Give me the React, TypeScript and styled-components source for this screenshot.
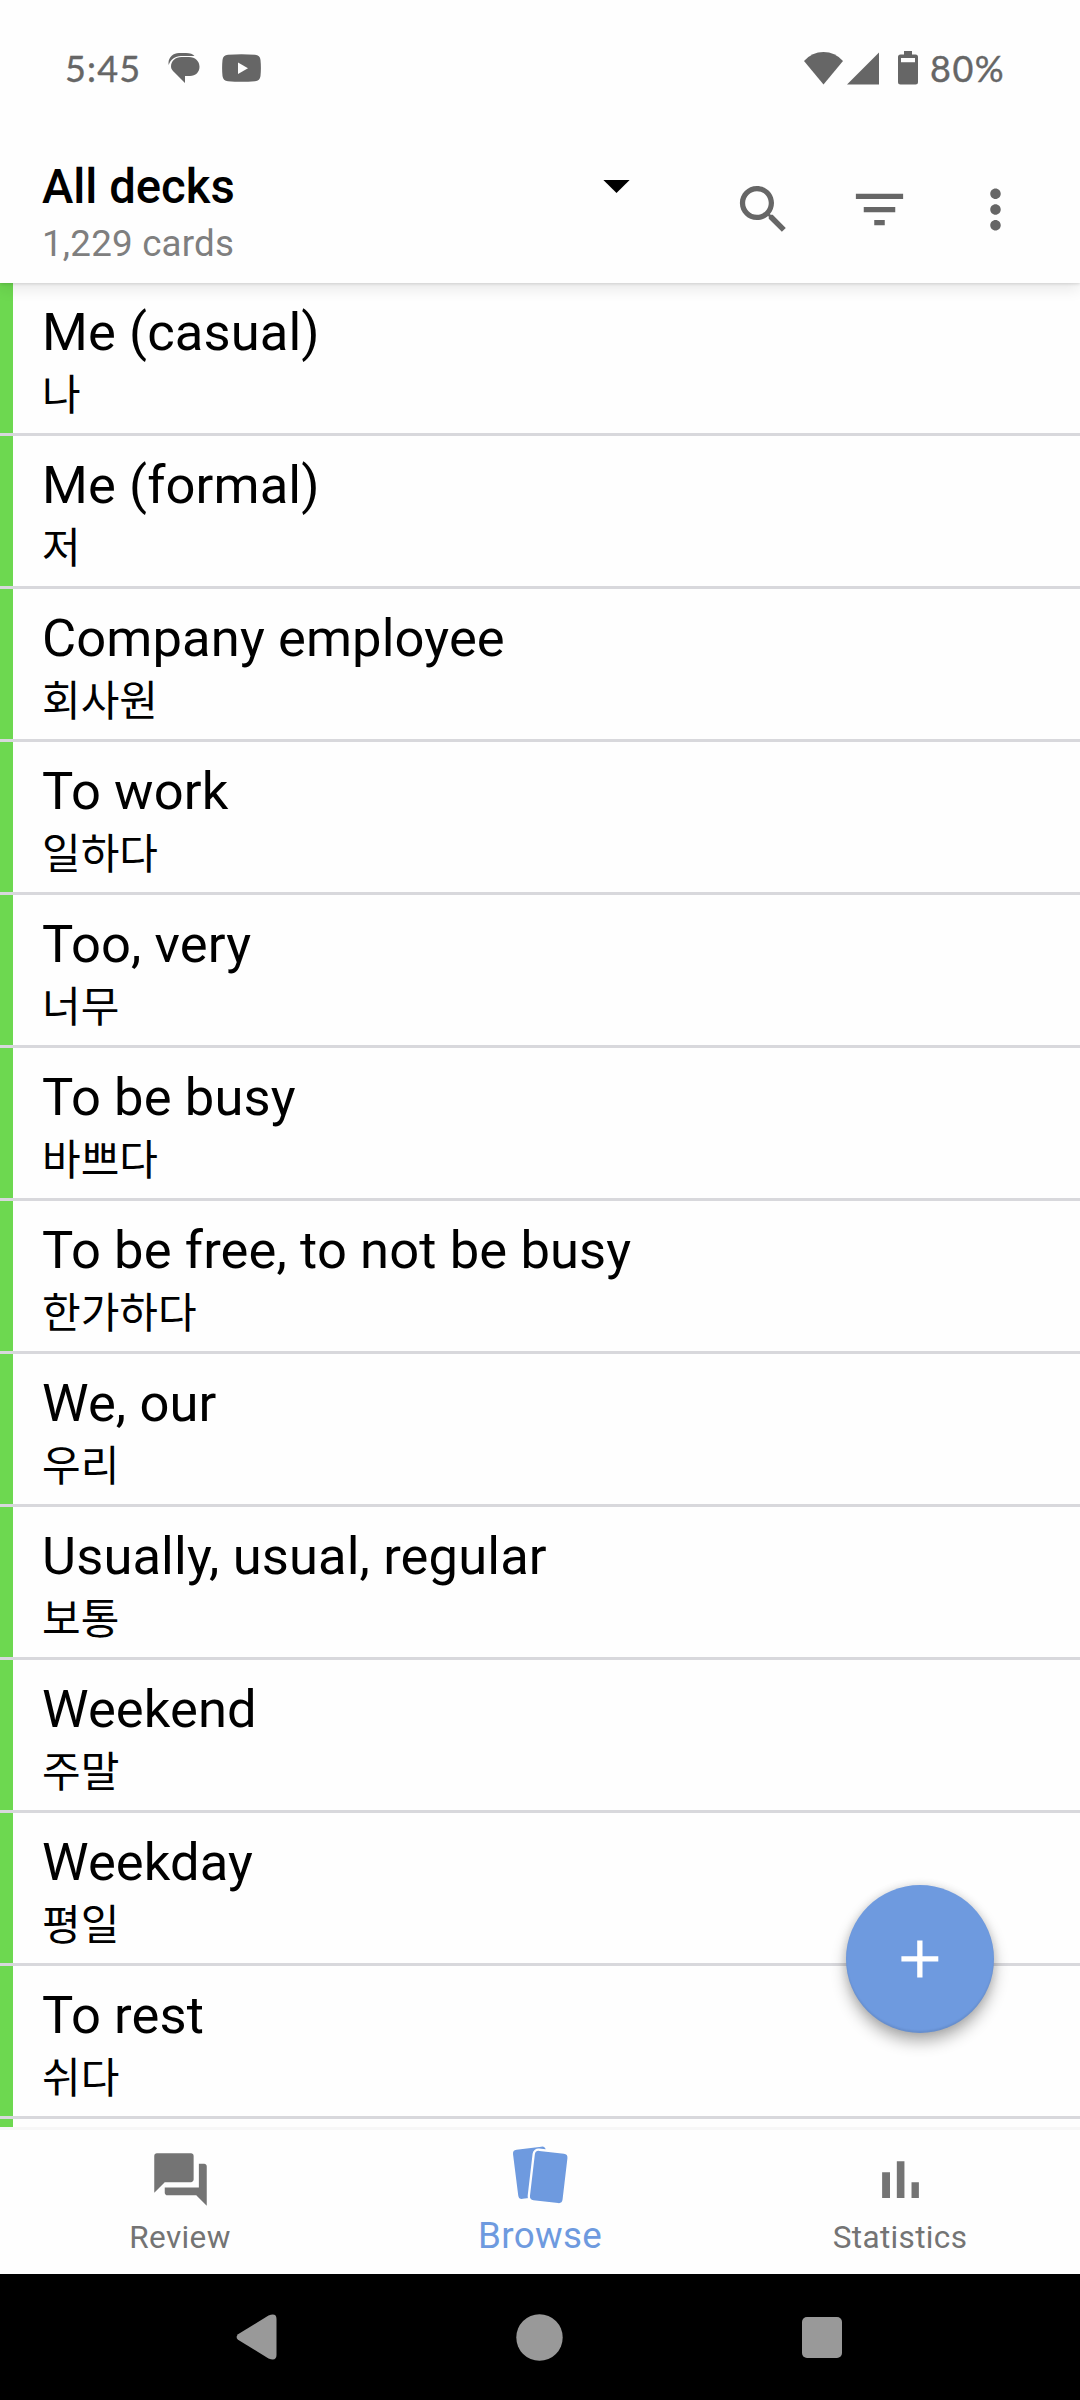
import React from 'react';
import styled, { createGlobalStyle } from 'styled-components';

const GlobalStyle = createGlobalStyle`
  *, *::before, *::after { box-sizing: border-box; }
  body { margin: 0; background: #fefefe; }
`;

const Screen = styled.div`
  position: relative;
  display: flex;
  flex-direction: column;
  width: 1080px;
  height: 2400px;
  overflow: hidden;
  background: #fefefe;
  color: #000;
  font-family: Roboto, 'Noto Sans CJK KR', sans-serif;
`;

const Header = styled.header`
  position: relative;
  z-index: 1;
  flex: none;
  height: 283px;
  background: #fefefe;
  box-shadow: 0 1px 3px rgba(0, 0, 0, 0.13), 0 6px 14px rgba(0, 0, 0, 0.09);
`;

const StatusBar = styled.div`
  display: flex;
  align-items: center;
  justify-content: space-between;
  height: 136px;
  padding: 0 76px 0 65px;
  color: #666;
  font-family: Lato, sans-serif;
  font-size: 36px;
`;

const StatusGroup = styled.div`
  display: flex;
  align-items: center;
`;

const StatusText = styled.span<{ $width: number; $spacing: number }>`
  width: ${(p) => p.$width}px;
  line-height: 44px;
  letter-spacing: ${(p) => p.$spacing}px;
  white-space: nowrap;
  -webkit-text-stroke: 0.4px #666;
`;

const Glyph = styled.svg<{ $left?: number }>`
  display: block;
  flex: none;
  margin-left: ${(p) => p.$left ?? 0}px;
`;

const Toolbar = styled.div`
  display: flex;
  align-items: flex-start;
  height: 147px;
  padding: 20px 53px 0 42px;
`;

const DeckPicker = styled.div`
  display: flex;
  justify-content: space-between;
  width: 606px;
`;

const DeckTitle = styled.h1`
  margin: 0;
  padding-top: 1px;
  font-size: 47.25px;
  line-height: 60px;
  font-weight: 500;
`;

const DeckCount = styled.div`
  margin-top: 2px;
  font-size: 36.75px;
  letter-spacing: 0.2px;
  line-height: 50px;
  color: #7f7f7f;
`;

const DropdownSlot = styled.div`
  height: 61px;
  margin-top: -1px;
`;

const Actions = styled.div`
  display: flex;
  gap: 53px;
  padding-top: 22px;
  margin-left: 84px;
  color: #666;
`;

const CardList = styled.main`
  flex: 1;
  overflow: hidden;
`;

const CardRow = styled.article`
  display: flex;
  flex-direction: column;
  height: 153px;
  padding: 17px 0 0 42px;
  border-bottom: 3px solid #d8d8dc;
  background: linear-gradient(to right, #6dd850 13px, transparent 13px);
`;

const Front = styled.div`
  font-size: 52.5px;
  letter-spacing: 0.12px;
  line-height: 64px;
`;

const Back = styled.div`
  margin-top: -2px;
  font-family: 'Noto Sans CJK KR', sans-serif;
  font-size: 42px;
  line-height: 60px;
`;

const FabButton = styled.button`
  position: absolute;
  left: 846px;
  top: 1885px;
  z-index: 2;
  display: flex;
  align-items: center;
  justify-content: center;
  width: 148px;
  height: 148px;
  padding: 0;
  border: 0;
  border-radius: 50%;
  background: #6e9adf;
  box-shadow: 0 9px 15px rgba(0, 0, 0, 0.3), 0 0 8px rgba(0, 0, 0, 0.12),
    inset 0 -2px 2px rgba(0, 0, 0, 0.08);
`;

const TabBar = styled.nav`
  display: flex;
  flex: none;
  height: 147px;
  border-top: 3px solid #f7f7f7;
`;

const Tab = styled.div<{ $active?: boolean }>`
  display: flex;
  flex: 1;
  flex-direction: column;
  align-items: center;
  padding-top: ${(p) => (p.$active ? 11 : 18)}px;
  color: ${(p) => (p.$active ? '#6e9adf' : '#747474')};
  font-size: ${(p) => (p.$active ? 36.75 : 31.5)}px;
`;

const TabLabel = styled.span<{ $gap: number }>`
  margin-top: ${(p) => p.$gap}px;
  letter-spacing: 0.35px;
  line-height: 44px;
`;

const SystemNav = styled.footer`
  display: flex;
  flex: none;
  align-items: center;
  justify-content: space-between;
  height: 126px;
  padding: 0 238px 0 236px;
  background: #000;
`;

const cards = [
  ['Me (casual)', '나'],
  ['Me (formal)', '저'],
  ['Company employee', '회사원'],
  ['To work', '일하다'],
  ['Too, very', '너무'],
  ['To be busy', '바쁘다'],
  ['To be free, to not be busy', '한가하다'],
  ['We, our', '우리'],
  ['Usually, usual, regular', '보통'],
  ['Weekend', '주말'],
  ['Weekday', '평일'],
  ['To rest', '쉬다'],
  ['', ''],
];

const MaterialIcon = ({ d }: { d: string }) => (
  <Glyph width="63" height="63" viewBox="0 0 24 24" fill="currentColor">
    <path d={d} />
  </Glyph>
);

export default function App() {
  return (
    <Screen>
      <GlobalStyle />
      <Header>
        <StatusBar>
          <StatusGroup>
            <StatusText $width={103} $spacing={1.2}>5:45</StatusText>
            <Glyph width="32" height="32" viewBox="0 0 32 32" fill="#666">
              <path d="M.7 13C-.6 6 5 1 11 1H18C22 1 25 2.300 26.500 4H13C7 4 2.500 7.500 .7 13Z" />
              <path d="M13.500 5H21C27 5 31.500 9 31.500 14.700C31.500 20 27.500 24 22 24H17V31L6.500 20.500C4.300 18.500 3 16.800 3 14.500C3 9 7.500 5 13.500 5Z" />
            </Glyph>
            <Glyph $left={22} width="39" height="28" viewBox="0 0 39 28">
              <path
                fill="#666"
                d="M6 .8Q19.500 -.3 33 .8Q38 1.200 38.500 6Q39.300 14 38.500 22Q38 26.800 33 27.200Q19.500 28.300 6 27.200Q1 26.800.5 22Q-.3 14 .5 6Q1 1.200 6 .8Z"
              />
              <path fill="#fefefe" d="M16 8.500V20L26 14.250Z" />
            </Glyph>
          </StatusGroup>
          <StatusGroup>
            <Glyph width="39" height="34" viewBox="0 0 39 34" fill="#666">
              <path d="M0 10Q8 1 19.500 1T39 10L19.500 33.500Z" />
            </Glyph>
            <Glyph $left={4} width="32" height="34" viewBox="0 0 32 34" fill="#666">
              <path d="M32 1.500V33.500H0Z" />
            </Glyph>
            <Glyph $left={19} width="20" height="34" viewBox="0 0 20 34" fill="#666">
              <path
                fillRule="evenodd"
                d="M6 0H14V3.500H17.500Q20 3.500 20 6V31Q20 33.500 17.500 33.500H2.500Q0 33.500 0 31V6Q0 3.500 2.500 3.500H6ZM3 7V11.300H17V7Z"
              />
            </Glyph>
            <Glyph $left={11} width="1" height="1" />
            <StatusText $width={74} $spacing={1.5}>80%</StatusText>
          </StatusGroup>
        </StatusBar>
        <Toolbar>
          <DeckPicker>
            <div>
              <DeckTitle>All decks</DeckTitle>
              <DeckCount>1,229 cards</DeckCount>
            </div>
            <DropdownSlot>
              <MaterialIcon d="M7 9.500l5 5 5-5z" />
            </DropdownSlot>
          </DeckPicker>
          <Actions>
            <MaterialIcon d="M15.500 14h-.79l-.28-.27C15.410 12.590 16 11.110 16 9.500 16 5.910 13.090 3 9.500 3S3 5.910 3 9.500 5.910 16 9.500 16c1.610 0 3.090-.59 4.230-1.570l.27.28v.79l5 4.990L20.490 19l-4.990-5zm-6 0C7.010 14 5 11.990 5 9.500S7.010 5 9.500 5 14 7.010 14 9.500 11.990 14 9.500 14z" />
            <MaterialIcon d="M10 18h4v-2h-4v2zM3 6v2h18V6H3zm3 7h12v-2H6v2z" />
            <MaterialIcon d="M12 8c1.100 0 2-.9 2-2s-.9-2-2-2-2 .9-2 2 .9 2 2 2zm0 2c-1.100 0-2 .9-2 2s.9 2 2 2 2-.9 2-2-.9-2-2-2zm0 6c-1.100 0-2 .9-2 2s.9 2 2 2 2-.9 2-2-.9-2-2-2z" />
          </Actions>
        </Toolbar>
      </Header>
      <CardList>
        {cards.map(([front, back], i) => (
          <CardRow key={i}>
            <Front>{front}</Front>
            <Back>{back}</Back>
          </CardRow>
        ))}
      </CardList>
      <TabBar>
        <Tab>
          <MaterialIcon d="M21 6h-2v9H6v2c0 .55.45 1 1 1h11l4 4V7c0-.55-.45-1-1-1zm-4 6V3c0-.55-.45-1-1-1H3c-.55 0-1 .45-1 1v14l4-4h10c.55 0 1-.45 1-1z" />
          <TabLabel $gap={5}>Review</TabLabel>
        </Tab>
        <Tab $active>
          <Glyph width="64" height="66" viewBox="508 2141 64 66" fill="#6e9adf">
            <rect x="515.500" y="2148" width="33" height="49.500" rx="4" transform="rotate(-7.200 532 2172.700)" />
            <rect
              x="530"
              y="2149.900"
              width="37.400"
              height="54.200"
              rx="6"
              fill="#fefefe"
              transform="rotate(6.700 548.700 2177)"
            />
            <rect x="532.300" y="2152.200" width="32.800" height="49.600" rx="4" transform="rotate(6.700 548.700 2177)" />
          </Glyph>
          <TabLabel $gap={7}>Browse</TabLabel>
        </Tab>
        <Tab>
          <MaterialIcon d="M5 9.200h3V19H5zM10.600 5h2.900v14h-2.900zM16.200 13H19v6h-2.800z" />
          <TabLabel $gap={5}>Statistics</TabLabel>
        </Tab>
      </TabBar>
      <SystemNav>
        <Glyph width="41" height="46" viewBox="0 0 41 46" fill="#999">
          <path d="M2 20.200L32.500 1.500Q40.500-1.500 40.500 5V41Q40.500 47.500 32.500 44.500L2 25.800Q-.8 23 2 20.200Z" />
        </Glyph>
        <Glyph width="47" height="47" viewBox="0 0 47 47" fill="#999">
          <circle cx="23.500" cy="23.500" r="23.200" />
        </Glyph>
        <Glyph width="40" height="41" viewBox="0 0 40 41" fill="#999">
          <rect width="40" height="41" rx="5" />
        </Glyph>
      </SystemNav>
      <FabButton aria-label="Add card">
        <Glyph width="38" height="38" viewBox="0 0 38 38" fill="#fff">
          <path d="M16.200.5h5.300V16.300H37.300v5.300H21.500V37.400H16.200V21.600H.4V16.300H16.200Z" />
        </Glyph>
      </FabButton>
    </Screen>
  );
}
